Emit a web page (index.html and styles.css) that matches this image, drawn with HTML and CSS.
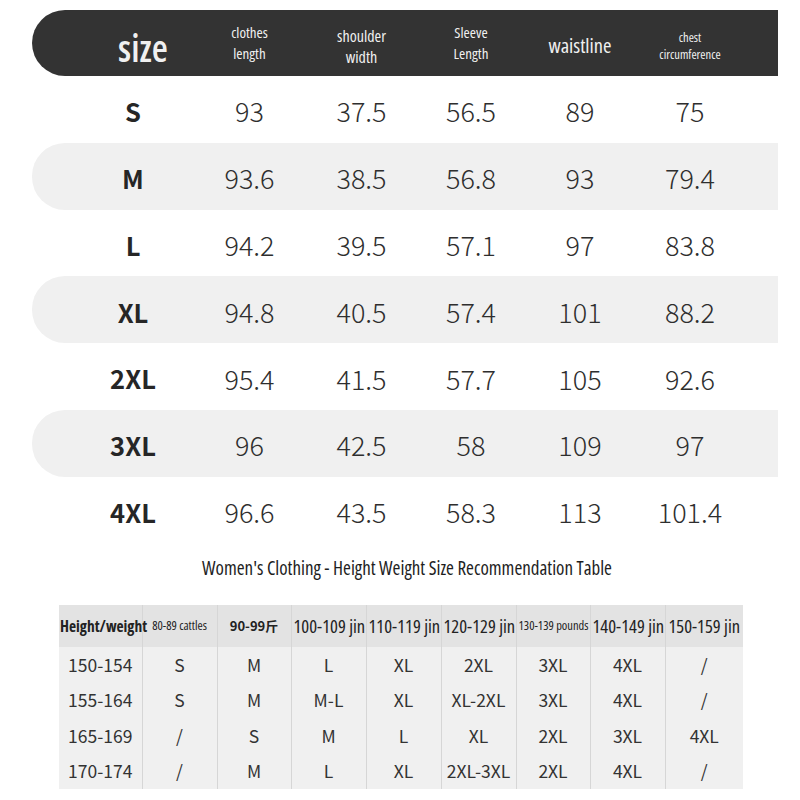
FILE: index.html
```
<!DOCTYPE html>
<html>
<head>
<meta charset="utf-8">
<link rel="stylesheet" href="styles.css">
</head>
<body>
<div class="page">
  <div class="chart">
    <div class="row head">
      <div class="hsize">size</div>
      <div class="hcell">clothes<br>length</div>
      <div class="hcell h15">shoulder<br>width</div>
      <div class="hcell">Sleeve<br>Length</div>
      <div class="hcell h17">waistline</div>
      <div class="hcell h11">chest<br>circumference</div>
    </div>
    <div class="row"><div class="sz">S</div><div>93</div><div>37.5</div><div>56.5</div><div>89</div><div>75</div></div>
    <div class="row alt"><div class="sz">M</div><div>93.6</div><div>38.5</div><div>56.8</div><div>93</div><div>79.4</div></div>
    <div class="row"><div class="sz">L</div><div>94.2</div><div>39.5</div><div>57.1</div><div>97</div><div>83.8</div></div>
    <div class="row alt"><div class="sz">XL</div><div>94.8</div><div>40.5</div><div>57.4</div><div>101</div><div>88.2</div></div>
    <div class="row"><div class="sz">2XL</div><div>95.4</div><div>41.5</div><div>57.7</div><div>105</div><div>92.6</div></div>
    <div class="row alt"><div class="sz">3XL</div><div>96</div><div>42.5</div><div>58</div><div>109</div><div>97</div></div>
    <div class="row"><div class="sz">4XL</div><div>96.6</div><div>43.5</div><div>58.3</div><div>113</div><div>101.4</div></div>
  </div>

  <h2 class="title">Women's Clothing - Height Weight Size Recommendation Table</h2>

  <table class="rec">
    <colgroup>
      <col class="c83"><col class="c75"><col class="c74"><col class="c75"><col class="c75"><col class="c75"><col class="c74"><col class="c75"><col class="c78">
    </colgroup>
    <thead>
      <tr>
        <th class="first">Height/weight</th>
        <th class="small">80-89 cattles</th>
        <th class="bold13">90-99斤</th>
        <th>100-109 jin</th>
        <th>110-119 jin</th>
        <th>120-129 jin</th>
        <th class="small">130-139 pounds</th>
        <th>140-149 jin</th>
        <th>150-159 jin</th>
      </tr>
    </thead>
    <tbody>
      <tr><td>150-154</td><td>S</td><td>M</td><td>L</td><td>XL</td><td>2XL</td><td>3XL</td><td>4XL</td><td>/</td></tr>
      <tr><td>155-164</td><td>S</td><td>M</td><td>M-L</td><td>XL</td><td>XL-2XL</td><td>3XL</td><td>4XL</td><td>/</td></tr>
      <tr><td>165-169</td><td>/</td><td>S</td><td>M</td><td>L</td><td>XL</td><td>2XL</td><td>3XL</td><td>4XL</td></tr>
      <tr><td>170-174</td><td>/</td><td>M</td><td>L</td><td>XL</td><td>2XL-3XL</td><td>2XL</td><td>4XL</td><td>/</td></tr>
    </tbody>
  </table>
</div>
</body>
</html>
```
FILE: styles.css
```
* { box-sizing: border-box; }
html, body { margin: 0; padding: 0; background: #ffffff; }
.page {
  width: 800px;
  height: 800px;
  padding-top: 10px;
  font-family: "Noto Sans CJK SC", "Noto Sans", sans-serif;
  color: #2e2e2e;
}
.chart {
  margin-left: 32px;
  width: 746px;
}
.row {
  display: grid;
  grid-template-columns: 120px 113px 111px 108px 110px 110px;
  padding: 3px 33px 0 41px;
  height: 66.8px;
  align-items: center;
  justify-items: center;
  font-size: 27px;
  font-weight: 300;
  line-height: 1;
}
.row.alt {
  background: #f0f0f0;
  border-radius: 33px 0 0 33px;
}
.row .sz {
  font-weight: 700;
  font-size: 25.5px;
  color: #262626;
}
.head {
  height: 66px;
  padding-top: 0;
  background: #333333;
  border-radius: 33px 0 0 33px;
  color: #f0f0f0;
  font-family: "Open Sans", "DejaVu Sans Condensed", sans-serif;
  font-stretch: 75%;
  font-weight: 500;
}
.hsize {
  font-size: 37px;
  font-weight: 600;
  padding-left: 20px;
  padding-top: 8px;
}
.hcell {
  font-size: 15px;
  line-height: 21px;
  text-align: center;
}
.hcell.h15 { font-size: 16px; padding-top: 8px; }
.hcell.h17 { font-size: 20.5px; padding-top: 4px; }
.hcell.h11 { font-size: 12.5px; line-height: 17px; padding-top: 6px; }

.title {
  margin: 13px 0 0 0;
  text-align: center;
  font-family: "Open Sans", "DejaVu Sans Condensed", sans-serif;
  font-stretch: 75%;
  font-size: 19px;
  line-height: 22px;
  font-weight: 500;
  color: #1e1e1e;
  padding-left: 14px;
}
.rec {
  margin: 26px 0 0 59px;
  width: 684px;
  border-collapse: collapse;
  table-layout: fixed;
}
.c83 { width: 83px; }
.c75 { width: 75px; }
.c74 { width: 74px; }
.c78 { width: 78px; }
.rec th, .rec td {
  border-left: 1px solid #d6d6d6;
  padding: 0 2px;
  text-align: center;
  white-space: nowrap;
  overflow: visible;
}
.rec th:first-child, .rec td:first-child { border-left: none; }
.rec thead tr { height: 42px; background: #e3e3e3; }
.rec th {
  font-family: "Open Sans", "DejaVu Sans Condensed", sans-serif;
  font-stretch: 75%;
  font-size: 18.5px;
  font-weight: 500;
  color: #222;
}
.rec th.first {
  text-align: left;
  padding-left: 1px;
  font-weight: 700;
  font-size: 15.5px;
}
.rec th.small { font-size: 12.5px; }
.rec th.bold13 {
  font-size: 13px;
  font-weight: 700;
  font-family: "Noto Sans CJK SC", sans-serif;
  font-stretch: normal;
}
.rec tbody tr { height: 35.5px; background: #f0f0f0; }
.rec td {
  font-size: 17.5px;
  color: #333;
  font-weight: 400;
}
```
